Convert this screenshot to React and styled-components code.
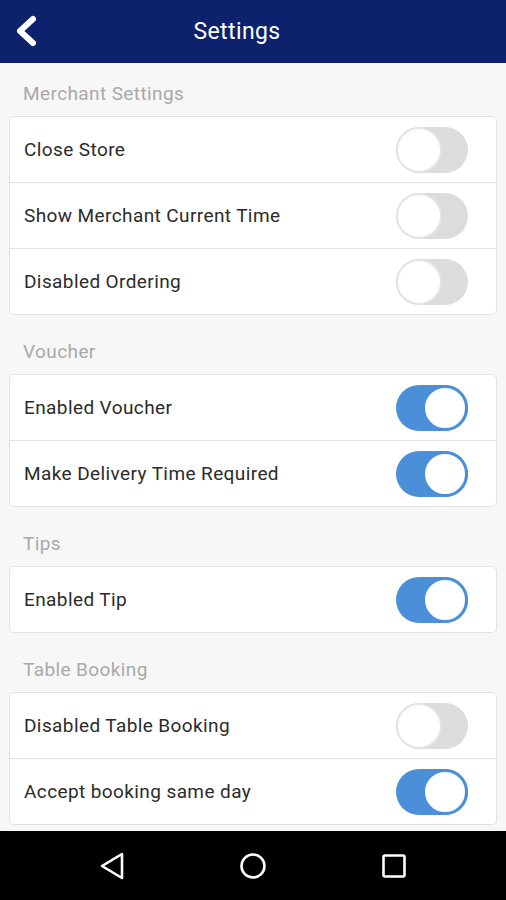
import React from 'react';
import styled, { createGlobalStyle } from 'styled-components';

const COLORS = {
  navy: '#0d226c',
  page: '#f7f7f7',
  border: '#e2e2e2',
  label: '#a9a9a9',
  text: '#2b2b2b',
  blue: '#4a8fd8',
  offTrack: '#dcdcdc',
};

const GlobalStyle = createGlobalStyle`
  html, body {
    margin: 0;
    padding: 0;
    background: ${COLORS.page};
  }
  body {
    font-family: Roboto, 'Noto Sans', 'Liberation Sans', sans-serif;
  }
`

const Screen = styled.div`
  width: 506px;
  height: 900px;
  display: flex;
  flex-direction: column;
  background: ${COLORS.page};
  overflow: hidden;
`

const TopBar = styled.header`
  height: 63px;
  flex-shrink: 0;
  background: ${COLORS.navy};
  display: flex;
  align-items: center;
  justify-content: center;
  padding-right: 32px;
  position: relative;
`

const BackButton = styled.button`
  position: absolute;
  left: 9px;
  top: 13px;
  width: 32px;
  height: 36px;
  padding: 0;
  border: 0;
  background: none;
  display: flex;
  align-items: center;
  justify-content: center;
`

const Title = styled.h1`
  margin: 0;
  color: #fff;
  font-size: 23px;
  font-weight: 400;
  letter-spacing: 0.4px;
`

const Content = styled.main`
  flex: 1;
  padding: 0 9px;
  overflow: hidden;
`

const SectionLabel = styled.div`
  height: 53px;
  box-sizing: border-box;
  padding: 20px 0 0 14px;
  margin-top: ${p => (p.$first ? 0 : 6)}px;
  color: ${COLORS.label};
  font-size: 19px;
  letter-spacing: 0.4px;
  line-height: 22px;
`

const Card = styled.div`
  background: #fff;
  border: 1px solid ${COLORS.border};
  border-radius: 5px;
  overflow: hidden;
`

const Row = styled.div`
  height: 65px;
  display: flex;
  align-items: center;
  justify-content: space-between;
  padding: 0 28px 0 14px;
  border-top: ${p => (p.$first ? 'none' : `1px solid ${COLORS.border}`)};
`

const RowText = styled.span`
  color: ${COLORS.text};
  font-size: 19px;
  letter-spacing: 0.4px;
  margin-top: -1px;
`

const Track = styled.span`
  width: 72px;
  height: 46px;
  box-sizing: border-box;
  border-radius: 23px;
  background: ${p => (p.$on ? COLORS.blue : COLORS.offTrack)};
  display: flex;
  align-items: center;
  justify-content: ${p => (p.$on ? 'flex-end' : 'flex-start')};
  flex-shrink: 0;
`

const Knob = styled.span`
  width: 46px;
  height: 46px;
  box-sizing: border-box;
  border-radius: 50%;
  background: #fff;
  border: ${p => (p.$on ? `3px solid ${COLORS.blue}` : '2px solid #e4e4e4')};
`

const NavBar = styled.nav`
  height: 69px;
  flex-shrink: 0;
  background: #000;
  display: flex;
  align-items: center;
  justify-content: center;
  gap: 111px;
`

const NavIcon = styled.span`
  width: 30px;
  height: 30px;
  display: flex;
  align-items: center;
  justify-content: center;
`

const Toggle = ({ on }) => (
  <Track $on={on}>
    <Knob $on={on} />
  </Track>
);

const sections = [
  {
    title: 'Merchant Settings',
    rows: [
      ['Close Store', false],
      ['Show Merchant Current Time', false],
      ['Disabled Ordering', false],
    ],
  },
  {
    title: 'Voucher',
    rows: [
      ['Enabled Voucher', true],
      ['Make Delivery Time Required', true],
    ],
  },
  {
    title: 'Tips',
    rows: [['Enabled Tip', true]],
  },
  {
    title: 'Table Booking',
    rows: [
      ['Disabled Table Booking', false],
      ['Accept booking same day', true],
    ],
  },
];

export default function App() {
  return (
    <>
      <GlobalStyle />
      <Screen>
        <TopBar>
          <BackButton aria-label="Back">
            <svg width="28" height="34" viewBox="0 0 28 34">
              <path d="M22 5 L9 17 L22 29" fill="none" stroke="#fff" strokeWidth="6" strokeLinecap="round" strokeLinejoin="round" />
            </svg>
          </BackButton>
          <Title>Settings</Title>
        </TopBar>
        <Content>
          {sections.map((s, i) => (
            <React.Fragment key={s.title}>
              <SectionLabel $first={i === 0}>{s.title}</SectionLabel>
              <Card>
                {s.rows.map(([label, on], j) => (
                  <Row key={label} $first={j === 0}>
                    <RowText>{label}</RowText>
                    <Toggle on={on} />
                  </Row>
                ))}
              </Card>
            </React.Fragment>
          ))}
        </Content>
        <NavBar>
          <NavIcon>
            <svg width="28" height="30" viewBox="0 0 28 30">
              <path d="M24 3 L4 15 L24 27 Z" fill="none" stroke="#fff" strokeWidth="2.6" strokeLinejoin="round" />
            </svg>
          </NavIcon>
          <NavIcon>
            <svg width="28" height="28" viewBox="0 0 28 28">
              <circle cx="14" cy="14" r="11.5" fill="none" stroke="#fff" strokeWidth="2.6" />
            </svg>
          </NavIcon>
          <NavIcon>
            <svg width="26" height="26" viewBox="0 0 26 26">
              <rect x="2.5" y="2.5" width="21" height="21" rx="1.5" fill="none" stroke="#fff" strokeWidth="2.6" />
            </svg>
          </NavIcon>
        </NavBar>
      </Screen>
    </>
  );
}
